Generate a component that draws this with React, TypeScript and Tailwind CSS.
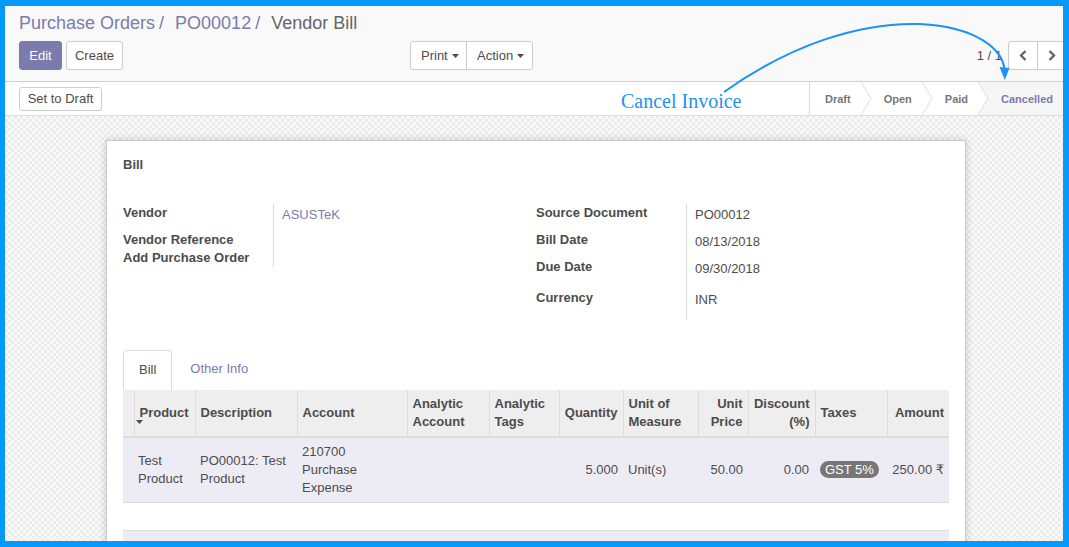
import React from 'react';

const cols = [11, 61, 102, 110, 82, 70, 64, 75, 50, 67, 72, 62];

const headers: { label: React.ReactNode; right?: boolean }[] = [
  { label: '' },
  { label: 'Product' },
  { label: 'Description' },
  { label: 'Account' },
  { label: <>Analytic<br />Account</> },
  { label: <>Analytic<br />Tags</> },
  { label: 'Quantity', right: true },
  { label: <>Unit of<br />Measure</> },
  { label: <>Unit<br />Price</>, right: true },
  { label: <>Discount<br />(%)</>, right: true },
  { label: 'Taxes' },
  { label: 'Amount', right: true },
];

const Caret = () => (
  <svg width="7" height="4" viewBox="0 0 7 4" className="inline-block ml-[4px] align-middle">
    <polygon points="0,0 7,0 3.5,4" fill="#4c4c4c" />
  </svg>
);

const Chevron = () => (
  <svg width="11" height="33" viewBox="0 0 11 33" className="absolute left-0 top-0">
    <polygon points="0,0 10,16.5 0,33" fill="#ffffff" />
    <polyline points="0,0 10,16.5 0,33" fill="none" stroke="#dcdcdc" strokeWidth="1" />
  </svg>
);

const FieldRow = ({ label, value, h, link }: { label: string; value?: string; h: string; link?: boolean }) => (
  <div className={`flex ${h}`}>
    <div className="w-[150px] shrink-0 font-bold leading-[18px]">{label}</div>
    <div className={`flex-1 border-l border-[#dcdcdc] pl-[8px] pt-[2px] leading-[18px] ${link ? 'text-[#7c7bad]' : ''}`}>
      {value}
    </div>
  </div>
);

export default function App() {
  return (
    <div className="relative w-[1069px] h-[547px] overflow-hidden bg-white text-[13px] text-[#4c4c4c] font-['Liberation_Sans','DejaVu_Sans',sans-serif]">
      <div className="h-full flex flex-col overflow-hidden border-solid border-[#0599fb] border-t-[6px] border-l-[5px] border-r-[6px] border-b-[6px]">
        {/* Control panel */}
        <div className="shrink-0 bg-[#f9f9f9] border-b border-[#cfcfcf] pl-[14px] pt-[5px] pb-[11px]">
          <div className="h-[24px] leading-[24px] text-[18px] flex">
            <span className="text-[#7c7bad]">Purchase Orders</span>
            <span className="text-[#7c7bad] pl-[4px] pr-[11px]">/</span>
            <span className="text-[#7c7bad]">PO00012</span>
            <span className="text-[#7c7bad] pl-[4px] pr-[11px]">/</span>
            <span className="text-[#666666]">Vendor Bill</span>
          </div>
          <div className="mt-[6px] flex items-center h-[29px]">
            <button className="w-[43px] h-[29px] rounded-[3px] bg-[#7c7bad] border border-[#7c7bad] text-white">Edit</button>
            <button className="ml-[4px] w-[57px] h-[29px] rounded-[3px] bg-white border border-[#cccccc]">Create</button>
            <div className="ml-[287px] flex h-[29px] rounded-[3px] border border-[#cccccc] bg-white">
              <button className="w-[56px] h-full border-r border-[#cccccc] pl-[10px] text-left flex items-center">
                Print<Caret />
              </button>
              <button className="w-[65px] h-full pl-[10px] text-left flex items-center">
                Action<Caret />
              </button>
            </div>
            <div className="ml-auto flex items-center">
              <span className="mr-[6px]">1 / 1</span>
              <div className="flex h-[29px] border border-[#cccccc] rounded-l-[3px] bg-white mr-[-8px]">
                <button className="w-[29px] h-full border-r border-[#cccccc] flex items-center justify-center">
                  <svg width="8" height="11" viewBox="0 0 8 11">
                    <polyline points="6.5,1 2,5.5 6.5,10" fill="none" stroke="#666666" strokeWidth="2.4" />
                  </svg>
                </button>
                <button className="w-[32px] h-full flex items-center pl-[10px]">
                  <svg width="8" height="11" viewBox="0 0 8 11">
                    <polyline points="1.5,1 6,5.5 1.5,10" fill="none" stroke="#666666" strokeWidth="2.4" />
                  </svg>
                </button>
              </div>
            </div>
          </div>
        </div>

        {/* Status bar */}
        <div className="shrink-0 h-[34px] bg-white border-b border-[#dcdcdc] flex items-center pl-[14px]">
          <button className="w-[83px] h-[24px] mt-[1px] rounded-[3px] border border-[#cccccc] bg-white">Set to Draft</button>
          <div className="ml-auto h-full flex text-[11px] font-bold text-[#777777] mr-[-6px]">
            <div className="h-full flex items-center border-l border-[#dcdcdc] pl-[15px] pr-[10px] pt-[2px]">Draft</div>
            <div className="relative h-full flex items-center pl-[23px] pr-[10px] pt-[2px]">
              <Chevron />Open
            </div>
            <div className="relative h-full flex items-center pl-[23px] pr-[10px] pt-[2px]">
              <Chevron />Paid
            </div>
            <div className="relative h-full flex items-center pl-[23px] pr-[16px] pt-[2px] bg-[#f6f6f6] text-[#7c7bad]">
              <Chevron />Cancelled
            </div>
          </div>
        </div>

        {/* Form view */}
        <div className="flex-1 overflow-hidden pt-[24px] bg-[repeating-conic-gradient(#ececec_0_25%,#f9f9f9_0_50%)] bg-[length:6px_6px]">
          <div className="ml-[101px] w-[860px] min-h-[600px] bg-white border border-[#c9c9d3] shadow-[0_0_8px_rgba(0,0,0,0.18)] px-[16px] pt-[15px]">
            <div className="font-bold leading-[18px]">Bill</div>

            <div className="mt-[30px] grid grid-cols-2">
              <div>
                <FieldRow label="Vendor" value="ASUSTeK" h="h-[27px]" link />
                <FieldRow label="Vendor Reference" h="h-[18px]" />
                <FieldRow label="Add Purchase Order" h="h-[18px]" />
              </div>
              <div>
                <FieldRow label="Source Document" value="PO00012" h="h-[27px]" />
                <FieldRow label="Bill Date" value="08/13/2018" h="h-[27px]" />
                <FieldRow label="Due Date" value="09/30/2018" h="h-[31px]" />
                <FieldRow label="Currency" value="INR" h="h-[31px]" />
              </div>
            </div>

            {/* Tabs */}
            <div className="mt-[30px] flex h-[40px]">
              <div className="h-[40px] px-[15px] border border-b-0 border-[#dcdcdc] rounded-t-[4px] bg-white leading-[38px]">Bill</div>
              <div className="ml-[2px] h-[40px] px-[16px] leading-[38px] text-[#7c7bad]">Other Info</div>
            </div>

            {/* Invoice lines */}
            <table className="table-fixed w-[826px] border-collapse">
              <colgroup>
                {cols.map((w, i) => (
                  <col key={i} style={{ width: w }} />
                ))}
              </colgroup>
              <thead>
                <tr className="bg-[#eeeeee] h-[47px]">
                  {headers.map((h, i) => (
                    <th
                      key={i}
                      className={`relative px-[5px] font-bold leading-[18px] align-middle border-b-2 border-b-[#dddddd] ${
                        i > 0 ? 'border-l border-l-[#dcdcdc]' : ''
                      } ${h.right ? 'text-right' : 'text-left'}`}
                    >
                      {h.label}
                      {i === 1 && (
                        <svg width="7" height="4" viewBox="0 0 7 4" className="absolute left-[1px] top-[30px]">
                          <polygon points="0,0 7,0 3.5,4" fill="#4c4c4c" />
                        </svg>
                      )}
                    </th>
                  ))}
                </tr>
              </thead>
              <tbody>
                <tr className="bg-[#edecf5] h-[65px] border-b border-[#dcdcdc] leading-[18px]">
                  <td></td>
                  <td className="px-[4px] align-middle">Test Product</td>
                  <td className="px-[5px] align-middle">PO00012: Test Product</td>
                  <td className="px-[5px] align-middle">210700 Purchase Expense</td>
                  <td></td>
                  <td></td>
                  <td className="px-[5px] text-right align-middle">5.000</td>
                  <td className="px-[5px] align-middle">Unit(s)</td>
                  <td className="px-[5px] text-right align-middle">50.00</td>
                  <td className="px-[6px] text-right align-middle">0.00</td>
                  <td className="px-[5px] align-middle">
                    <span className="inline-block rounded-full bg-[#777777] text-white px-[5px] leading-[17px]">GST 5%</span>
                  </td>
                  <td className="px-[5px] text-right align-middle whitespace-nowrap">250.00 ₹</td>
                </tr>
                <tr className="h-[28px]">
                  <td colSpan={12}></td>
                </tr>
              </tbody>
              <tfoot>
                <tr className="bg-[#edecf5] h-[40px] border-t border-[#dcdcdc]">
                  <td colSpan={12}></td>
                </tr>
              </tfoot>
            </table>
          </div>
        </div>
      </div>

      {/* Annotation overlay */}
      <svg className="absolute inset-0 pointer-events-none" width="1069" height="547" viewBox="0 0 1069 547">
        <path
          d="M724 92 C 790 45, 860 22, 920 24 C 978 27, 1003 50, 1004.5 70"
          fill="none"
          stroke="#1a93f5"
          strokeWidth="2"
        />
        <polygon points="999.5,67 1009.5,68 1004.8,80" fill="#1a93f5" />
      </svg>
      <div className="absolute left-[621px] top-[89px] text-[20px] leading-[24px] text-[#1a93f5] font-['Liberation_Serif',serif] whitespace-nowrap">
        Cancel Invoice
      </div>
    </div>
  );
}
